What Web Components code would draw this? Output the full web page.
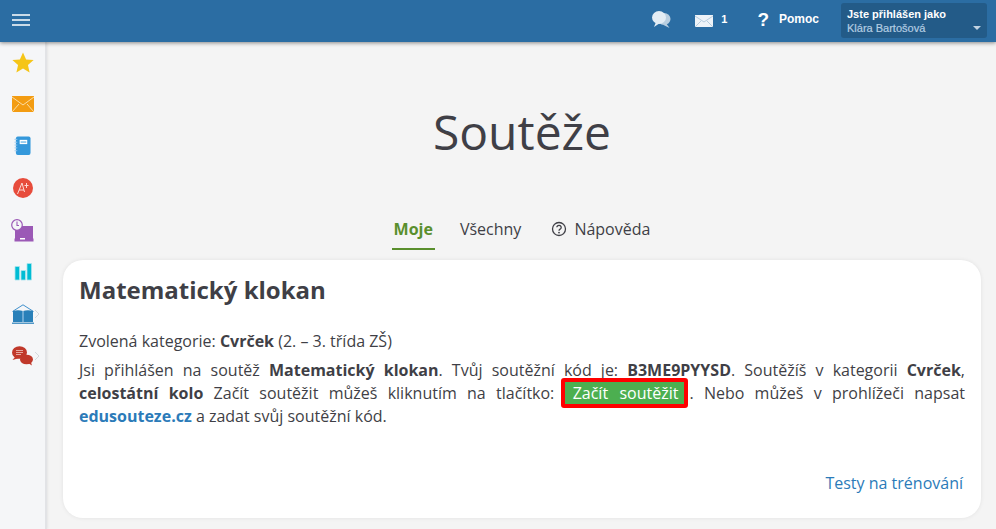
<!DOCTYPE html>
<html lang="cs"><head><meta charset="utf-8"><title>Soutěže</title>
<style>
html,body{margin:0;padding:0;height:100%;}
body{font-family:"Open Sans",sans-serif;color:#3f3f46;background:#f4f4f4;overflow:hidden;}
</style></head><body>
<template id="t-app"><style>
:host{display:grid;grid-template-columns:47px 1fr;grid-template-rows:42px 1fr;width:996px;height:529px;overflow:hidden;}
::slotted(edu-topbar){grid-column:1/3;grid-row:1;}
::slotted(edu-sidebar){grid-column:1;grid-row:2;}
::slotted(edu-main){grid-column:2;grid-row:2;}
</style><slot></slot></template>

<template id="t-topbar"><style>
:host{display:flex;align-items:center;background:#2b6da3;color:#fff;height:42px;box-shadow:0 1px 4px rgba(0,0,0,.45);position:relative;z-index:3;font:bold 12px "Liberation Sans",Arial,sans-serif;box-sizing:border-box;padding:0 9px 0 12px;}
.burger{width:18px;height:12px;margin-top:-3px;}
.sp{flex:1;}
.chat{width:20px;height:19px;margin-right:24px;margin-top:-3px;}
.mail{width:18px;height:12px;margin-right:8px;margin-top:-1px;}
.n{font-size:11px;margin-right:30px;margin-top:-4px;}
.q{font-size:19px;margin-right:10px;margin-top:-2px;}
.p{margin-right:22px;font-size:12px;margin-top:-4px;}
.user{width:146px;height:35px;margin-top:-1px;background:#235b88;border-radius:3px;box-sizing:border-box;padding:4px 6px;position:relative;font-size:11px;line-height:14px;}
.user div+div{color:#b4cde2;font-size:11px;font-weight:400;-webkit-text-stroke:.2px #b4cde2;}
.user i{position:absolute;right:6px;bottom:8px;border:4px solid transparent;border-top-color:#c2d3e2;border-bottom:0;}
</style>
<svg class="burger" viewBox="0 0 18 12"><path d="M0 1h18M0 6h18M0 11h18" stroke="#fff" stroke-width="1.600"/></svg>
<span class="sp"></span>
<svg class="chat" viewBox="0 0 20 19"><ellipse cx="13" cy="9" rx="6.500" ry="6" fill="#b9cfe1"/><path d="M15 13l3.500 5-6-3z" fill="#b9cfe1"/><ellipse cx="8" cy="7.500" rx="7" ry="6.500" fill="#e3edf5"/><path d="M5 12l-2 5 6-4z" fill="#e3edf5"/></svg>
<svg class="mail" viewBox="0 0 18 12"><rect width="18" height="12" fill="#eef3f8"/><path d="M0 1l9 6 9-6M0 12l6-6M18 12l-6-6" stroke="#9dbad3" stroke-width=".7" fill="none"/></svg>
<span class="n">1</span>
<span class="q">?</span><span class="p">Pomoc</span>
<div class="user"><div>Jste přihlášen jako</div><div>Klára Bartošová</div><i></i></div>
</template>

<template id="t-sidebar"><style>
:host{display:flex;flex-direction:column;align-items:center;background:#f5f6f8;border-right:2px solid #e2e3e6;box-sizing:border-box;width:47px;padding-top:5px;gap:12px;position:relative;z-index:2;box-shadow:1px 0 2px rgba(0,0,0,.06);}
.w{position:relative;width:46px;height:30px;display:flex;justify-content:center;align-items:center;flex:none;}
svg{display:block;}
.c{position:absolute;left:34px;top:10px;}
</style>
<div class="w"><svg width="22" height="21" viewBox="0 0 24 22"><path d="M12 0l3.400 7.600 8.200.8-6.200 5.400 1.800 8.100L12 17.600 4.800 21.900l1.800-8.100L.4 8.400l8.200-.8z" fill="#f5c518"/></svg></div>
<div class="w"><svg width="22" height="16" viewBox="0 0 22 16"><rect width="22" height="16" fill="#f39c12"/><path d="M0 1l11 8 11-8M0 16l7-8M22 16l-7-8" stroke="#fbe3b5" stroke-width=".9" fill="none"/></svg></div>
<div class="w"><svg width="17" height="20" viewBox="0 0 18 20"><rect x="2" y="0" width="15.500" height="19.500" rx="2" fill="#3498db"/><rect x="6" y="3.500" width="8" height="4.500" fill="#fff"/><rect x="7" y="5.300" width="6" height="1" fill="#3498db"/><path d="M.5 3h3M.5 6h3M.5 9h3M.5 12h3M.5 15h3" stroke="#9fcdf0" stroke-width="1"/></svg></div>
<div class="w"><svg width="20" height="20" viewBox="0 0 20 20"><circle cx="10" cy="10" r="10" fill="#e74c3c"/><path d="M4.500 16L9 5l2.500 9M6 12h5M13.500 5v5M11.500 7.500h4" stroke="#fbd9d5" stroke-width="1" fill="none"/></svg></div>
<div class="w"><svg width="23" height="23" viewBox="0 0 23 23"><rect x="4" y="7" width="18" height="13" fill="#9b59b6"/><rect x="3.500" y="19.500" width="19" height="3" fill="#9b59b6"/><rect x="9" y="19" width="5" height="1.500" fill="#fff"/><circle cx="6" cy="6" r="5.300" fill="#f5f6f8" stroke="#9b59b6" stroke-width="1.200"/><path d="M6 2.500V6.500H8" stroke="#9b59b6" stroke-width="1.100" fill="none"/></svg></div>
<div class="w"><svg width="18" height="18" viewBox="0 0 18 18"><path d="M1 3.500h4.500V17H1zM7 7.500h4.500V17H7zM13 .5h4.500V17H13z" fill="#00bcd4" stroke="#a8e4ee" stroke-width=".8"/></svg></div>
<div class="w"><svg width="22" height="20" viewBox="0 0 22 20"><path d="M0.500 7.500L11 .8l10.500 6.700" fill="none" stroke="#3f8fcb" stroke-width="1"/><path d="M1 7q5-1.500 10 0 5-1.500 10 0v11H1z" fill="#2980b9"/><path d="M11 7v11" stroke="#9cc7e6" stroke-width="1.200"/><path d="M0 19.200h22" stroke="#2980b9" stroke-width="1.200" fill="none"/></svg><svg class="c" width="6" height="10" viewBox="0 0 6 10"><path d="M1 1l4 4-4 4" fill="none" stroke="#d5d8dc" stroke-width="1"/></svg></div>
<div class="w"><svg width="21" height="20" viewBox="0 0 21 20"><ellipse cx="7.500" cy="6.500" rx="7.500" ry="6.300" fill="#c0392b"/><path d="M3 11l-2.500 3 7-2z" fill="#c0392b"/><ellipse cx="14.500" cy="13.500" rx="6.500" ry="4.800" fill="#c0392b"/><path d="M16 17l4 2.500-1.500-4.500z" fill="#c0392b"/><path d="M4 4.500h7M4 6.500h7M4 8.500h5" stroke="#eab4ad" stroke-width=".9"/></svg><svg class="c" width="6" height="10" viewBox="0 0 6 10"><path d="M1 1l4 4-4 4" fill="none" stroke="#d5d8dc" stroke-width="1"/></svg></div>
</template>

<template id="t-main"><style>
:host{display:flex;flex-direction:column;align-items:center;background:#f4f4f4;padding:0 15px 0 16px;box-sizing:border-box;min-width:0;}
h1{font:400 48px/66px "Open Sans",sans-serif;margin:57px 0 45px;color:#3f3f46;}
.tabs{display:flex;align-items:flex-start;gap:23px;margin:0 0 10px 0;font-size:16px;}
</style>
<h1>Soutěže</h1>
<div class="tabs"><slot name="tabs"></slot></div>
<slot></slot>
</template>

<template id="t-tab"><style>
:host{display:flex;align-items:center;height:40px;box-sizing:border-box;padding:0 2px 2px;font:400 16px/22px "Open Sans",sans-serif;color:#3f3f46;gap:7px;}
:host([active]){font-weight:700;color:#5a8f2d;box-shadow:inset 0 -2px 0 #5a8f2d;}
::slotted(svg){flex:none;margin-left:3px;}
</style><slot name="i"></slot><slot></slot></template>

<template id="t-card"><style>
:host{display:block;width:918px;height:258px;background:#fff;border-radius:20px;box-sizing:border-box;padding:14px 16px;box-shadow:0 0 4px rgba(0,0,0,.08);position:relative;font:400 16px/23px "Open Sans",sans-serif;color:#3f3f46;}
h2{font:700 24px/33px "Open Sans",sans-serif;margin:-1px 0 24px;color:#3f3f46;}
.foot{position:absolute;right:18px;top:212px;color:#2b7bb9;}
</style>
<h2><slot name="title"></slot></h2>
<slot></slot>
<div class="foot"><slot name="foot"></slot></div>
</template>

<template id="t-btn"><style>
:host{display:inline;background:#4caf50;background-clip:padding-box;color:#fff;border:4px solid #f00;border-radius:3px;padding:0 6px 0 8px;margin:0 1px 0 -4px;word-spacing:1px;}
</style><slot></slot></template>

<edu-app>
<edu-topbar></edu-topbar>
<edu-sidebar></edu-sidebar>
<edu-main>
<edu-tab slot="tabs" active>Moje</edu-tab>
<edu-tab slot="tabs">Všechny</edu-tab>
<edu-tab slot="tabs"><svg slot="i" width="16" height="16" viewBox="0 0 16 16"><circle cx="8" cy="8" r="6.500" fill="none" stroke="#3f3f46" stroke-width="1.300"/><path d="M5.800 6.300a2.200 2 0 1 1 3.300 1.800c-.8.500-1.100.9-1.100 1.700" fill="none" stroke="#3f3f46" stroke-width="1.300"/><circle cx="8" cy="11.600" r=".9" fill="#3f3f46"/></svg>Nápověda</edu-tab>
<edu-card>
<span slot="title">Matematický klokan</span>
<div style="margin:0 0 6px">Zvolená kategorie: <b>Cvrček</b> (2. – 3. třída ZŠ)</div>
<div style="text-align:justify">Jsi přihlášen na soutěž <b>Matematický klokan</b>. Tvůj soutěžní kód je: <b>B3ME9PYYSD</b>. Soutěžíš v kategorii <b>Cvrček</b>, <b>celostátní kolo</b> Začít soutěžit můžeš kliknutím na tlačítko: <edu-btn>Začít soutěžit</edu-btn>. Nebo můžeš v prohlížeči napsat <b style="color:#2b7bb9">edusouteze.cz</b> a zadat svůj soutěžní kód.</div>
<span slot="foot">Testy na trénování</span>
</edu-card>
</edu-main>
</edu-app>
<script>
function def(name,tid){customElements.define(name,class extends HTMLElement{constructor(){super();this.attachShadow({mode:"open"}).appendChild(document.getElementById(tid).content.cloneNode(true));}});}
def("edu-app","t-app");def("edu-topbar","t-topbar");def("edu-sidebar","t-sidebar");def("edu-main","t-main");def("edu-tab","t-tab");def("edu-card","t-card");def("edu-btn","t-btn");
</script>
</body></html>
